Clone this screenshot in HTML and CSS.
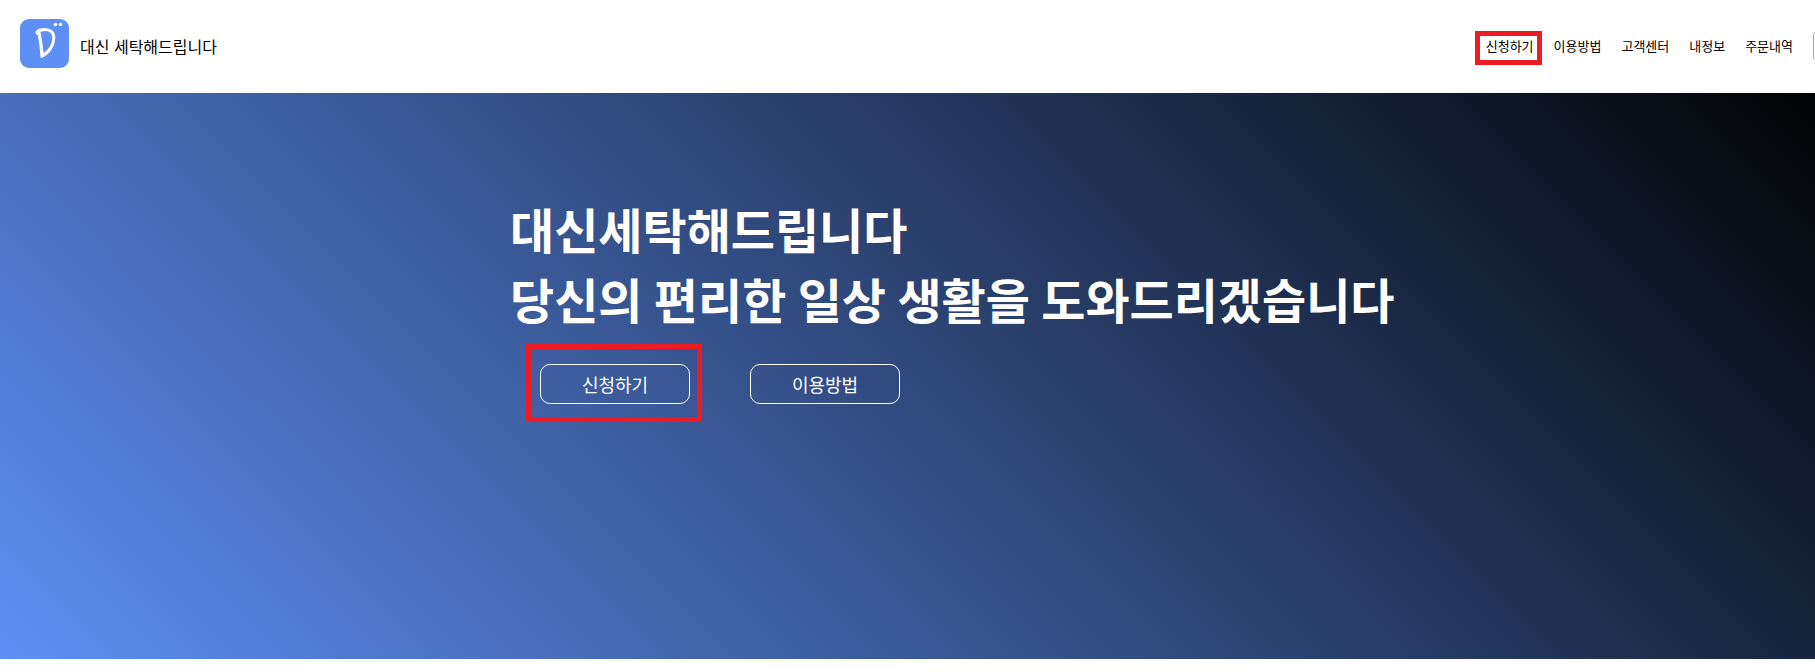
FILE: index.html
```html
<!DOCTYPE html>
<html lang="ko">
<head>
<meta charset="utf-8">
<title>대신 세탁해드립니다</title>
<link rel="stylesheet" href="styles.css">
</head>
<body>
<header class="header">
  <a class="brand" href="#">
    <svg class="logo" viewBox="0 0 49 49" aria-hidden="true">
      <rect width="49" height="49" rx="9" fill="#5e8ff5"/>
      <circle cx="35.500" cy="5.500" r="1.800" fill="#fff"/>
      <circle cx="40.500" cy="5.500" r="1.800" fill="#fff"/>
      <path fill="#fff" fill-rule="evenodd" d="M15.500 14C15 12 17 10.500 20 9.500C28 7.500 35.500 11 35.300 18.500C35 27 30 35.500 21.500 39C20.500 39 20.300 38 20.400 37C20 30 19 22 17.500 15.500C17 16 15.900 15.500 15.500 14ZM20.500 13C22 20 23 27 23.600 34C29 30.500 32 25 32.300 19C32.500 13.500 27.500 10.500 20.500 13Z"/>
    </svg>
    <span>대신 세탁해드립니다</span>
  </a>
  <nav class="nav">
    <a class="nav-link marked" href="#">신청하기</a>
    <a class="nav-link" href="#">이용방법</a>
    <a class="nav-link" href="#">고객센터</a>
    <a class="nav-link" href="#">내정보</a>
    <a class="nav-link" href="#">주문내역</a>
    <input class="search" type="search" aria-label="검색">
  </nav>
</header>
<main class="hero">
  <h1 class="title">대신세탁해드립니다<br>당신의 편리한 일상 생활을 도와드리겠습니다</h1>
  <div class="actions">
    <div class="action marked"><button class="button" type="button">신청하기</button></div>
    <div class="action"><button class="button" type="button">이용방법</button></div>
  </div>
</main>
</body>
</html>
```
FILE: styles.css
```css
* {
  box-sizing: border-box;
}

body {
  margin: 0;
  background: #fff;
  color: #000;
  font-family: "Noto Sans CJK KR", "Noto Sans", sans-serif;
}

.header {
  display: flex;
  align-items: center;
  justify-content: space-between;
  height: 93px;
  padding: 0 0 2px 20px;
  overflow: hidden;
}

.brand {
  display: flex;
  align-items: center;
  gap: 11px;
  color: inherit;
  font-size: 16px;
  line-height: 22px;
  text-decoration: none;
}

.logo {
  width: 49px;
  height: 49px;
  margin-bottom: 5px;
}

.nav {
  display: flex;
  align-items: center;
  gap: 20px;
}

.nav-link {
  position: relative;
  color: inherit;
  font-size: 13px;
  line-height: 18px;
  text-decoration: none;
  white-space: nowrap;
}

.search {
  flex: none;
  width: 180px;
  height: 30px;
  margin: 0 -178px 0 0;
  border: 1px solid #aaa;
  border-radius: 4px;
  background: #fff;
}

.marked::after {
  content: "";
  position: absolute;
  border: 5px solid #ed1c24;
  pointer-events: none;
}

.nav-link.marked::after {
  inset: -6px -8px -10px -11px;
}

.hero {
  padding: 104px 0 255px 28.1%;
  background: linear-gradient(45deg, #5e8ff4, #020304);
  color: #fff;
}

.title {
  margin: 0;
  font-family: Inter, "Noto Sans CJK KR", sans-serif;
  font-size: 48px;
  font-weight: 700;
  line-height: 70px;
}

.actions {
  display: flex;
  gap: 60px;
  padding: 27px 0 0 30px;
}

.action {
  position: relative;
}

.action.marked::after {
  inset: -20px -12px -18px -14px;
}

.button {
  display: block;
  width: 150px;
  height: 40px;
  padding: 0;
  border: 1px solid #fff;
  border-radius: 10px;
  background: transparent;
  color: #fff;
  font-family: inherit;
  font-size: 18px;
}
```
